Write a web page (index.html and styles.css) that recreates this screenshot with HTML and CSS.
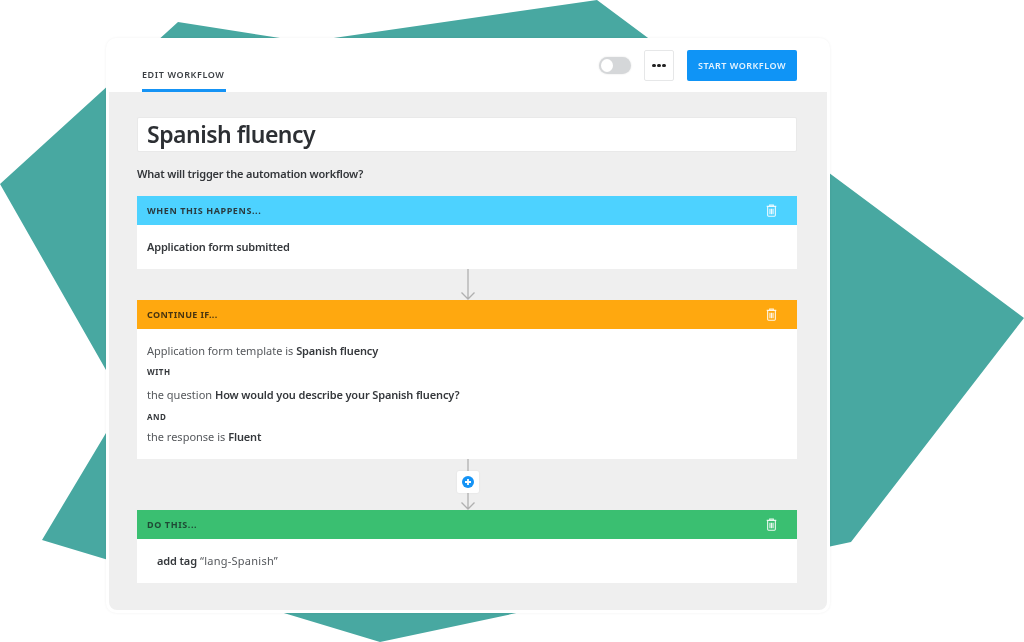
FILE: index.html
```html
<!DOCTYPE html>
<html lang="en">
<head>
<meta charset="utf-8">
<title>Edit workflow</title>
<link rel="stylesheet" href="styles.css">
</head>
<body>
<svg class="backdrop" width="1024" height="642" viewBox="0 0 1024 642" aria-hidden="true">
  <polygon class="backdrop-shape" points="178,22 306,42 597,0 1024,318 851,542 380,642 42,540 106,433 106,370 0,184"/>
</svg>
<main class="card">
  <header class="topbar">
    <div class="tab">EDIT WORKFLOW</div>
    <div class="actions">
      <span class="toggle"><span class="knob"></span></span>
      <span class="more"><i></i><i></i><i></i></span>
      <span class="start">START WORKFLOW</span>
    </div>
  </header>
  <section class="panel">
    <h1 class="title">Spanish fluency</h1>
    <p class="question">What will trigger the automation workflow?</p>

    <div class="step">
      <div class="step-head blue"><span>WHEN THIS HAPPENS...</span>
        <svg class="trash" viewBox="0 0 12 14"><path d="M4 2V1h4v1M.8 2.5h10.400M1.800 3v9.200q0 1 1 1h6.400q1 0 1-1V3M4.300 5v6.200M6 5v6.200M7.700 5v6.200"/></svg>
      </div>
      <div class="step-body single first-body"><b>Application form submitted</b></div>
    </div>

    <div class="connector plain"><svg width="16" height="31" viewBox="0 0 16 31"><path d="M8 0v30M1.500 23.500L8 30l6.500-6.500"/></svg></div>

    <div class="step">
      <div class="step-head orange"><span class="tight">CONTINUE IF...</span>
        <svg class="trash" viewBox="0 0 12 14"><path d="M4 2V1h4v1M.8 2.5h10.400M1.800 3v9.200q0 1 1 1h6.400q1 0 1-1V3M4.300 5v6.200M6 5v6.200M7.700 5v6.200"/></svg>
      </div>
      <div class="step-body rules">
        <div class="rule">Application form template is <b>Spanish fluency</b></div>
        <div class="joiner with">WITH</div>
        <div class="rule">the question <b>How would you describe your Spanish fluency?</b></div>
        <div class="joiner and">AND</div>
        <div class="rule">the response is <b>Fluent</b></div>
      </div>
    </div>

    <div class="connector add">
      <svg width="16" height="51" viewBox="0 0 16 51"><path d="M8 0v50M1.500 43.500L8 50l6.500-6.500"/></svg>
      <span class="plus"><svg width="12" height="12" viewBox="0 0 12 12"><circle cx="6" cy="6" r="6"/><path d="M3 6h6M6 3v6"/></svg></span>
    </div>

    <div class="step">
      <div class="step-head green"><span>DO THIS...</span>
        <svg class="trash" viewBox="0 0 12 14"><path d="M4 2V1h4v1M.8 2.5h10.400M1.800 3v9.200q0 1 1 1h6.400q1 0 1-1V3M4.300 5v6.200M6 5v6.200M7.700 5v6.200"/></svg>
      </div>
      <div class="step-body single action"><b>add tag</b> “lang-Spanish”</div>
    </div>
  </section>
</main>
</body>
</html>
```
FILE: styles.css
```css
* { box-sizing: border-box; }
html, body { margin: 0; height: 642px; overflow: hidden; background: #fff; }
body {
  position: relative;
  padding: 38px 194px 0 106px;
  font-family: "Noto Sans", "Open Sans", sans-serif;
  color: #2f3237;
}
.backdrop { position: absolute; left: 0; top: 0; }
.backdrop-shape { fill: #48a8a1; }
.card {
  position: relative;
  width: 724px;
  height: 575px;
  padding: 0 3px 3px;
  background: #fff;
  border-radius: 10px;
  box-shadow: 0 0 3px rgba(0,0,0,.06);
  display: flex;
  flex-direction: column;
}
.topbar, .panel { filter: blur(.35px); }
.topbar {
  height: 54px;
  flex: none;
  padding: 0 30px 0 33px;
  display: flex;
  justify-content: space-between;
  align-items: flex-start;
}
.tab {
  margin-top: 31px;
  height: 23px;
  width: 84px;
  font-size: 9px;
  line-height: 12px;
  font-weight: 600;
  letter-spacing: .6px;
  white-space: nowrap;
  color: #3b3f44;
  border-bottom: 3px solid #1593f5;
}
.actions { display: flex; align-items: center; margin-top: 12px; }
.toggle {
  width: 32px; height: 17px;
  margin-right: 13px;
  background: #d5d7d9;
  border-radius: 9px;
  padding: 2px;
  box-shadow: 0 0 2px rgba(0,0,0,.12);
}
.knob { display: block; width: 12px; height: 13px; border-radius: 50%; background: #fff; }
.more {
  width: 30px; height: 31px;
  margin-right: 13px;
  background: #fff;
  border: 1px solid #e6e7e8;
  border-radius: 2px;
  display: flex; align-items: center; justify-content: center; gap: 1.500px;
}
.more i { width: 3.500px; height: 3.500px; border-radius: 50%; background: #222; }
.start {
  width: 110px; height: 31px;
  background: #0f94f6;
  border-radius: 2px;
  color: #e4f3ff;
  font-size: 9px;
  font-weight: 600;
  letter-spacing: .5px;
  line-height: 31px;
  text-align: center;
  white-space: nowrap;
}
.panel {
  flex: 1;
  background: #efefef;
  border-radius: 0 0 8px 8px;
  padding: 25px 30px 0 28px;
  display: flex;
  flex-direction: column;
}
.title {
  margin: 0;
  height: 35px;
  background: #fff;
  border: 1px solid #e9e9e9;
  border-radius: 2px;
  padding-left: 9px;
  font-size: 23px;
  line-height: 32px;
  font-weight: 600;
  letter-spacing: -.5px;
  color: #2c2f33;
}
.question {
  margin: 14px 0 15px;
  height: 15px;
  font-size: 11px;
  line-height: 15px;
  font-weight: 600;
  letter-spacing: -.21px;
  color: #33363a;
}
.step-head {
  height: 29px;
  padding: 0 20px 0 10px;
  display: flex;
  justify-content: space-between;
  align-items: center;
  font-size: 9px;
  font-weight: 700;
  letter-spacing: .6px;
  color: #2a3b40;
}
.tight { letter-spacing: .35px; }
.blue { background: #4dd2ff; }
.orange { background: #ffa80f; color: #4a3510; }
.green { background: #3abf71; color: #1f4a35; }
.trash { width: 11px; height: 13px; fill: none; stroke: #fff; stroke-width: 1.200; opacity: .9; }
.step-body { background: #fff; font-size: 11px; line-height: 15px; color: #55585c; }
.step-body b { font-weight: 600; letter-spacing: -.14px; color: #35383c; }
.single { height: 44px; padding: 14px 10px 0; }
.first-body b { letter-spacing: -.2px; }
.action { padding: 14px 20px 0; letter-spacing: .25px; }
.rules { height: 130px; padding: 14px 10px 0; }
.rule { line-height: 15px; }
.joiner {
  font-size: 8px;
  line-height: 11px;
  font-weight: 700;
  letter-spacing: .5px;
  color: #35383c;
}
.with { margin: 8px 0 10px; }
.and { margin: 9px 0 7px; }
.connector {
  position: relative;
  display: flex;
  justify-content: center;
  padding-left: 2px;
}
.connector.plain { height: 31px; }
.connector.add { height: 51px; }
.connector svg path { fill: none; stroke: #b0b0b0; stroke-width: 1.300; }
.plus {
  position: absolute;
  left: 50%; top: 12px;
  margin-left: -10px;
  width: 22px; height: 22px;
  background: #fff;
  border-radius: 2px;
  box-shadow: 0 0 2px rgba(0,0,0,.08);
  display: flex; align-items: center; justify-content: center;
}
.plus circle { fill: #1593f5; }
.connector .plus path { stroke: #fff; stroke-width: 1.800; }
```
